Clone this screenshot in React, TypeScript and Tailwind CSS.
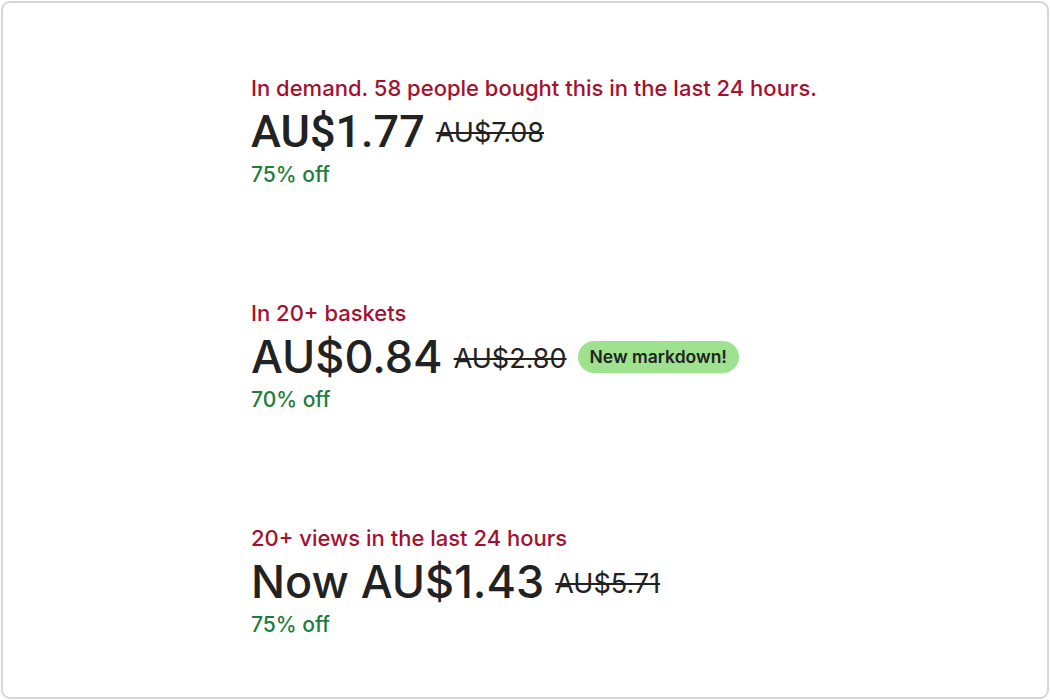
interface DealProps {
  readonly signal: string
  readonly price: string
  readonly was: string
  readonly off: string
  readonly badge?: string
  readonly robotoPrice?: boolean
}

function Badge({ children }: { children: React.ReactNode }) {
  return (
    <span className="ml-[11px] inline-flex h-[32px] items-center rounded-full bg-[#9ee28f] px-[12px] font-['Inter','Noto_Sans',sans-serif] text-[17.5px] font-semibold text-[#222]">
      {children}
    </span>
  )
}

function Deal({ signal, price, was, off, badge, robotoPrice }: DealProps) {
  return (
    <div className="flex flex-col font-['Inter','Noto_Sans',sans-serif]">
      <p className="text-[22px] leading-[28px] font-medium text-[#a3112e]">{signal}</p>
      <div className="mt-[4px] flex h-[52px] items-center">
        <span
          className={`text-[45px] leading-[52px] font-medium text-[#222] ${
            robotoPrice ? "font-['Roboto','Noto_Sans',sans-serif]" : ''
          }`}
        >
          {price}
        </span>
        <span
          className={`ml-[11px] text-[27px] leading-[32px] text-[#222] line-through decoration-[1.5px] ${
            robotoPrice ? 'mt-[2px]' : 'mt-[4px]'
          }`}
        >
          {was}
        </span>
        {badge && <Badge>{badge}</Badge>}
      </div>
      <p className="mt-[4px] text-[21px] leading-[26px] font-medium text-[#1b7d3a]">{off}</p>
    </div>
  )
}

export default function App() {
  return (
    <div className="h-[700px] w-[1050px] bg-white p-[1px]">
      <div className="flex h-full w-full flex-col gap-[111px] rounded-[9px] border-2 border-[#d6d6d6] pt-[71px] pl-[248px]">
        <Deal
          robotoPrice
          signal="In demand. 58 people bought this in the last 24 hours."
          price="AU$1.77"
          was="AU$7.08"
          off="75% off"
        />
        <Deal signal="In 20+ baskets" price="AU$0.84" was="AU$2.80" off="70% off" badge="New markdown!" />
        <Deal signal="20+ views in the last 24 hours" price="Now AU$1.43" was="AU$5.71" off="75% off" />
      </div>
    </div>
  )
}
